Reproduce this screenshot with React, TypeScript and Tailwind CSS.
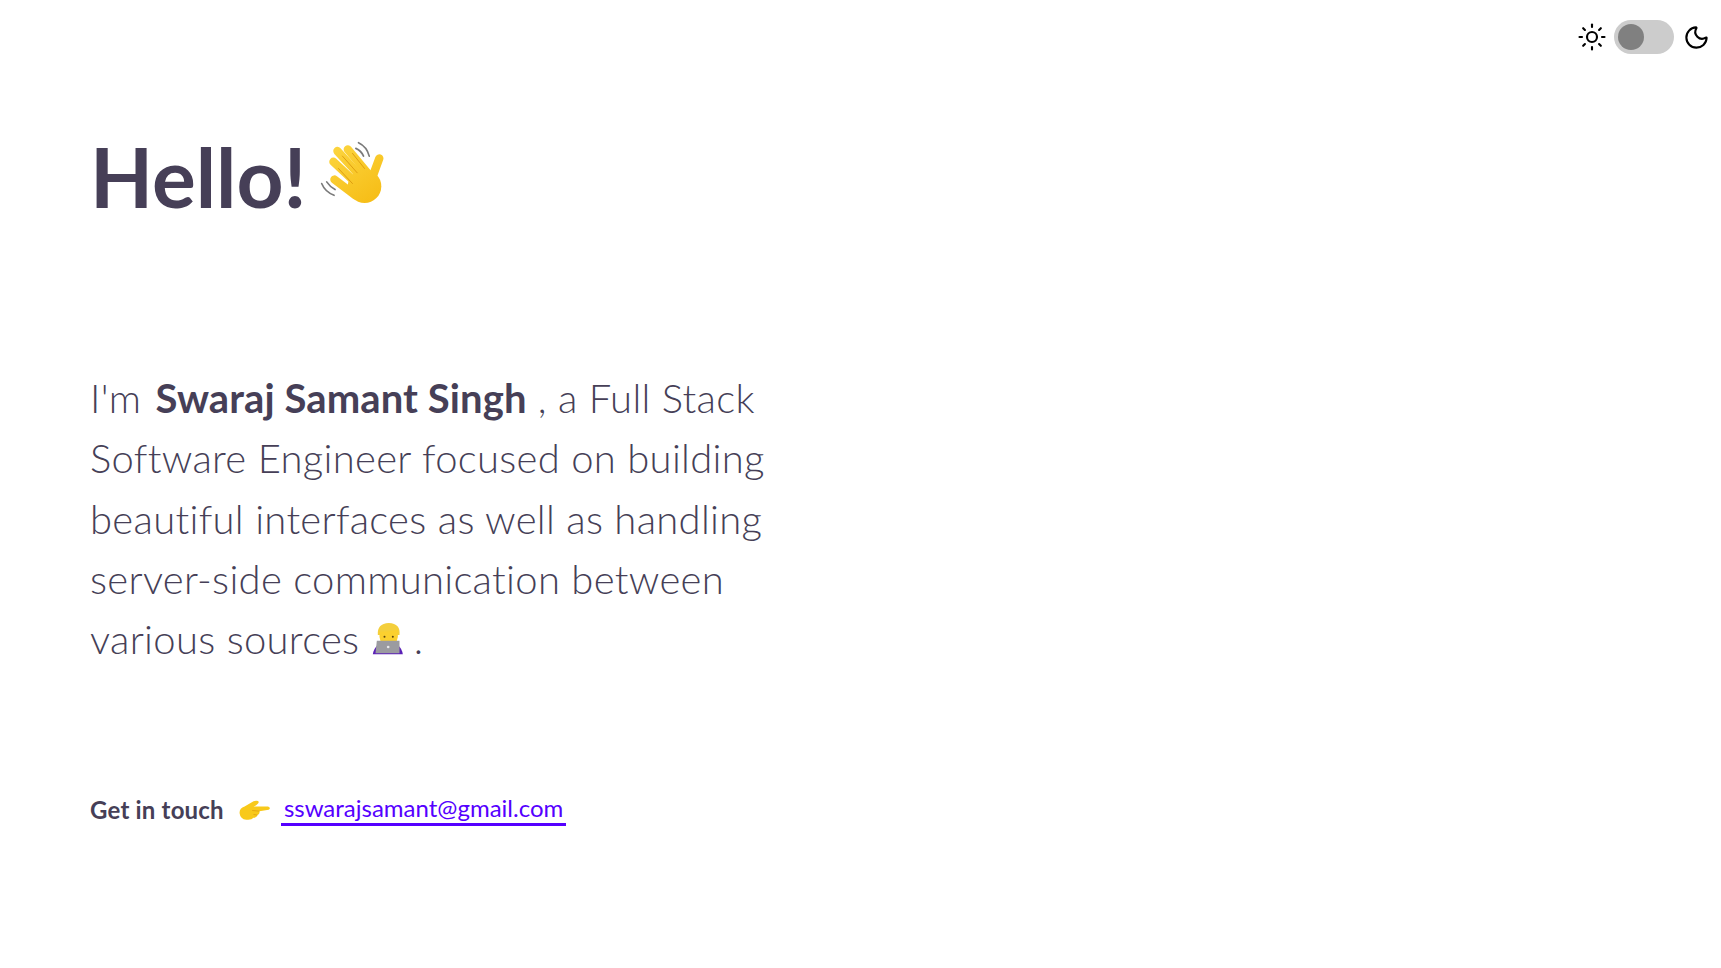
import { Moon, Sun } from 'lucide-react';

function WaveEmoji() {
  return (
    <svg viewBox="745 60 200 200" className="w-[67px] h-[67px] shrink-0 -mt-[6px]">
      <defs>
        <linearGradient id="hand" gradientUnits="userSpaceOnUse" x1="780" y1="80" x2="900" y2="250">
          <stop offset="0" stopColor="#fcd53f" />
          <stop offset="1" stopColor="#f6bd16" />
        </linearGradient>
      </defs>
      <g stroke="url(#hand)" strokeWidth="25" strokeLinecap="round" fill="none">
        <path d="M788 178 850 225" />
        <path d="M785 125 860 195" />
        <path d="M797 93 872 175" />
        <path d="M828 88 892 165" />
        <path d="M922 115 900 175" />
      </g>
      <ellipse cx="878" cy="198" rx="50" ry="50" fill="url(#hand)" />
      <path d="M800 145 842 190M812 108 856 158M842 100 878 145" stroke="#d9960c" strokeWidth="2.5" fill="none" strokeLinecap="round" />
      <path d="M750 190Q760 215 787 225M765 185Q775 200 790 208M860 68Q885 80 892 108M852 85Q868 92 875 108" stroke="#7a7a7a" strokeWidth="5" fill="none" strokeLinecap="round" />
    </svg>
  );
}

function CoderEmoji() {
  return (
    <svg viewBox="905 30 95 105" className="w-[32px] h-[35px]">
      <path d="M910 130Q915 95 955 92 995 95 1000 130z" fill="#5b21b6" />
      <path d="M925 72Q922 38 958 36 994 38 990 72z" fill="#f4cf3c" />
      <path d="M930 62Q960 62 985 56V78Q982 102 958 102 932 102 930 78z" fill="#fbd02f" />
      <circle cx="945" cy="77" r="3" fill="#5b4510" />
      <circle cx="970" cy="77" r="3" fill="#5b4510" />
      <path d="M922 89H990V127H918z" fill="#9b9ba0" />
      <circle cx="956" cy="108" r="4" fill="#e8e8ea" />
    </svg>
  );
}

function PointEmoji() {
  return (
    <svg viewBox="505 42 100 65" className="w-[33px] h-[22px]">
      <path d="M510 85Q508 70 525 64L552 48Q566 44 568 50 566 58 552 64L596 64Q606 68 598 74L570 78Q572 86 564 90 562 98 552 98 546 106 530 104 512 102 510 85z" fill="#f8c91a" />
      <path d="M548 76 570 78M552 88 564 90" stroke="#d9960c" strokeWidth="2" fill="none" />
    </svg>
  );
}

export default function App() {
  return (
    <div className="min-h-[968px] bg-white text-[#463f57] font-['Lato',sans-serif]">
      <div className="flex items-center justify-end pt-5 pr-[11px]">
        <Sun className="w-[30px] h-[30px] mr-[7px] text-black" strokeWidth={1.7} />
        <div className="flex items-center w-[60px] h-[34px] mr-[9px] rounded-full bg-[#cccccc] px-1">
          <div className="w-[26px] h-[26px] rounded-full bg-[#808080]" />
        </div>
        <Moon className="w-[27px] h-[27px] text-black" strokeWidth={1.9} />
      </div>

      <main className="pl-[90px] pt-[72px]">
        <h1 className="flex items-center gap-[13px] h-[100px] text-[82px] font-bold leading-none">
          Hello!
          <WaveEmoji />
        </h1>

        <p className="mt-[142px] w-[700px] text-[40px] font-light leading-[60.3px] tracking-[0.3px]">
          I'm <strong className="ml-[3px] font-bold tracking-[0.1px]">Swaraj Samant Singh</strong> , a Full Stack Software Engineer focused on building beautiful interfaces as well as handling server-side communication between various sources{' '}
          <span className="inline-block h-[35px] align-[-2px]">
            <CoderEmoji />
          </span>{' '}
          .
        </p>

        <div className="flex items-center mt-[124px] text-2xl">
          <span className="font-bold tracking-[0.2px]">Get in touch</span>
          <span className="ml-[14px] mr-[10px] flex">
            <PointEmoji />
          </span>
          <a href="#" className="px-[3px] text-[#5500ff] border-b-[3px] border-[#5500ff] leading-[30px]">
            sswarajsamant@gmail.com
          </a>
        </div>
      </main>
    </div>
  );
}
